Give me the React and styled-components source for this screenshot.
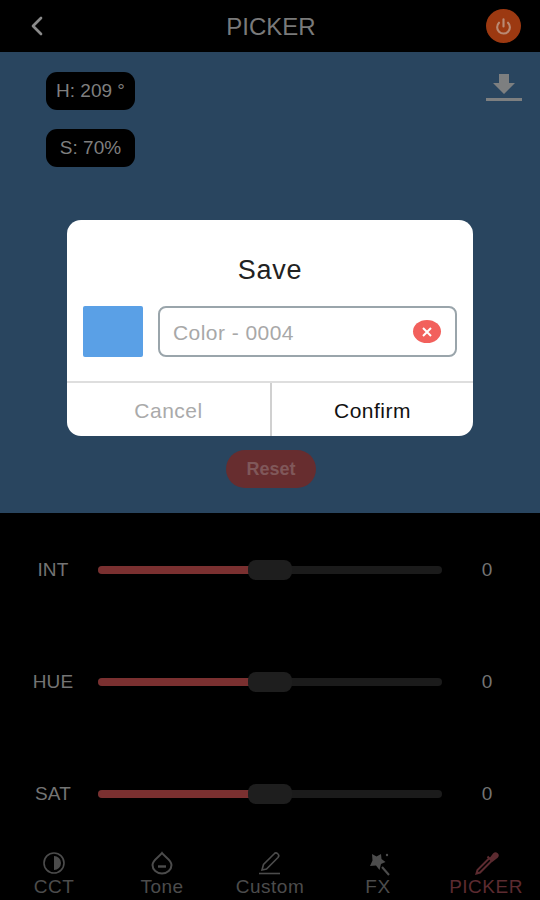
import styled, { createGlobalStyle } from "styled-components";
import { LuChevronLeft, LuPower } from "react-icons/lu";

const GlobalStyle = createGlobalStyle`
  html, body {
    margin: 0;
    background: #000;
    font-family: "Liberation Sans", Arial, sans-serif;
  }
`

const Screen = styled.div`
  position: relative;
  width: 540px;
  height: 900px;
  overflow: hidden;
  display: flex;
  flex-direction: column;
  background: #000;
`

const Header = styled.header`
  height: 52px;
  flex-shrink: 0;
  display: grid;
  grid-template-columns: 1fr auto 1fr;
  align-items: center;
  padding: 0 19px 0 21px;
  color: #7a7a7a;
`

const BackBtn = styled.div`
  display: flex;
  font-size: 32px;
  color: #8a8a8a;
`

const Title = styled.h1`
  margin: 2px 0 0;
  font-size: 24px;
  font-weight: 400;
`

const PowerBtn = styled.div`
  justify-self: end;
  width: 35px;
  height: 34px;
  border-radius: 50%;
  background: #9c3911;
  color: #b98a74;
  display: flex;
  align-items: center;
  justify-content: center;
  font-size: 17px;

  svg {
    stroke-width: 3;
  }
`

const Panel = styled.section`
  height: 461px;
  flex-shrink: 0;
  box-sizing: border-box;
  padding: 20px 18px 25px 46px;
  background: #29455f;
  display: flex;
  flex-direction: column;
`

const PanelTop = styled.div`
  display: flex;
  justify-content: space-between;
  align-items: flex-start;
`

const Chips = styled.div`
  display: flex;
  flex-direction: column;
  gap: 19px;
`

const Chip = styled.div`
  width: 89px;
  height: 38px;
  border-radius: 11px;
  background: #000;
  color: #7f7f7f;
  font-size: 19px;
  display: flex;
  align-items: center;
  justify-content: center;
`

const DownloadIcon = styled.svg`
  width: 36px;
  height: 28px;
  margin-top: 2px;
  fill: #7d7f80;
`

const ResetBtn = styled.div`
  margin: auto 0 0 180px;
  width: 90px;
  height: 38px;
  border-radius: 19px;
  background: #672d2f;
  color: #80585a;
  font-size: 18px;
  font-weight: 700;
  display: flex;
  align-items: center;
  justify-content: center;
`

const Sliders = styled.section`
  flex: 1;
  display: flex;
  flex-direction: column;
  gap: 92px;
  padding-top: 46px;
`

const SliderRow = styled.div`
  height: 20px;
  display: grid;
  grid-template-columns: 98px 344px 90px;
  align-items: center;
  color: #747474;
  font-size: 19px;
  line-height: 20px;
  text-align: center;
`

const SliderLabel = styled.span`
  padding: 1px 0 0 8px;
  letter-spacing: 0.2px;
`

const SliderValue = styled.span`
  padding-top: 1px;
`

const Track = styled.div`
  position: relative;
  height: 8px;
  border-radius: 4px;
  background: #1b1b1b;
`

const Fill = styled.div`
  height: 100%;
  border-radius: 4px 0 0 4px;
  background: #7a3030;
`

const Thumb = styled.div`
  position: absolute;
  top: -6px;
  width: 44px;
  height: 20px;
  border-radius: 8px;
  background: #1e1e1e;
`

const TabBar = styled.nav`
  height: 52px;
  box-sizing: border-box;
  padding-top: 2px;
  flex-shrink: 0;
  display: grid;
  grid-template-columns: repeat(5, 108px);
`

const Tab = styled.div`
  display: flex;
  flex-direction: column;
  align-items: center;
  color: ${(props) => (props.$active ? "#5c2b30" : "#4c4c4c")};
  font-size: 19px;
  line-height: 22px;
  letter-spacing: 0.5px;
`

const TabIcon = styled.svg`
  width: 26px;
  height: 26px;
  fill: none;
  stroke: currentColor;
  stroke-width: 1.6;
`

const Modal = styled.div`
  position: absolute;
  left: 67px;
  top: 220px;
  width: 406px;
  height: 216px;
  border-radius: 14px;
  background: #fff;
  display: flex;
  flex-direction: column;
  overflow: hidden;
`

const ModalTitle = styled.div`
  height: 86px;
  padding-top: 15px;
  box-sizing: border-box;
  display: flex;
  align-items: center;
  justify-content: center;
  color: #222;
  font-size: 27px;
  letter-spacing: 0.7px;
`

const ModalBody = styled.div`
  display: flex;
  gap: 15px;
  padding: 0 16px;
`

const Swatch = styled.div`
  width: 60px;
  height: 51px;
  border-radius: 2px;
  background: #5aa0e6;
`

const NameField = styled.div`
  flex: 1;
  box-sizing: border-box;
  border: 2px solid #9aa5ab;
  border-radius: 8px;
  padding: 2px 14px 0 13px;
  display: flex;
  align-items: center;
  justify-content: space-between;
  color: #a8a8a8;
  font-size: 21px;
  letter-spacing: 0.45px;
`

const ClearBtn = styled.div`
  width: 28px;
  height: 23px;
  margin-top: -2px;
  border-radius: 50%;
  background: #f2605c;
  display: flex;
  align-items: center;
  justify-content: center;
`

const ModalActions = styled.div`
  margin-top: auto;
  height: 53px;
  border-top: 2px solid #dedede;
  display: grid;
  grid-template-columns: 1fr 1fr;
`

const ActionBtn = styled.div`
  display: flex;
  align-items: center;
  justify-content: center;
  padding-top: 2px;
  font-size: 21px;
  letter-spacing: 0.5px;
  color: ${(props) => (props.$primary ? "#111" : "#aaa")};
  border-left: ${(props) => (props.$primary ? "2px solid #d0d0d0" : "none")};
`

const sliders = ["INT", "HUE", "SAT"];

function App() {
  return (
    <Screen>
      <GlobalStyle />
      <Header>
        <BackBtn><LuChevronLeft /></BackBtn>
        <Title>PICKER</Title>
        <PowerBtn><LuPower /></PowerBtn>
      </Header>

      <Panel>
        <PanelTop>
          <Chips>
            <Chip>H: 209 °</Chip>
            <Chip>S: 70%</Chip>
          </Chips>
          <DownloadIcon viewBox="0 0 36 28">
            <path d="M13 0h10v9h6L18 20 7 9h6z" />
            <rect x="0" y="24" width="36" height="3" />
          </DownloadIcon>
        </PanelTop>
        <ResetBtn>Reset</ResetBtn>
      </Panel>

      <Sliders>
        {sliders.map((name) => (
          <SliderRow key={name}>
            <SliderLabel>{name}</SliderLabel>
            <Track>
              <Fill style={{ width: "44%" }} />
              <Thumb style={{ left: "43.6%" }} />
            </Track>
            <SliderValue>0</SliderValue>
          </SliderRow>
        ))}
      </Sliders>

      <TabBar>
        <Tab>
          <TabIcon viewBox="0 0 26 26">
            <circle cx="13" cy="13" r="10" />
            <path d="M13 6a7 7 0 0 1 0 14z" fill="currentColor" stroke="none" />
          </TabIcon>
          CCT
        </Tab>
        <Tab>
          <TabIcon viewBox="0 0 26 26">
            <path d="M13 3C16 7 22.500 10 22.500 15a9.500 8.500 0 0 1-19 0C3.500 10 10 7 13 3z" strokeWidth="2" />
            <path d="M9 16.500h8" strokeWidth="2.400" />
          </TabIcon>
          Tone
        </Tab>
        <Tab>
          <TabIcon viewBox="0 0 26 26">
            <path d="M5 20l1.500-5.500L17 4a2.300 2.300 0 0 1 4 3.500L9.500 19z" />
            <path d="M2 23.500h21" />
          </TabIcon>
          Custom
        </Tab>
        <Tab>
          <TabIcon viewBox="0 0 26 26">
            <path d="M7 4l4.500 2.500L16 4l.5 5 4 3-4.500 2-1.500 6-3.500-4.500-6 .5 2.500-5.500z" fill="currentColor" stroke="none" />
            <path d="M17 17l7 8" strokeWidth="2" />
            <circle cx="22" cy="5" r="1.200" fill="currentColor" stroke="none" />
          </TabIcon>
          FX
        </Tab>
        <Tab $active>
          <TabIcon viewBox="0 0 26 26">
            <path d="M16 8.500L4.500 20l-1 3.500 3.500-1L18.500 11" strokeWidth="2" />
            <path d="M14.500 6.500l5 5M17 9l4-5a2 2 0 0 1 3 3l-5 4z" fill="currentColor" strokeWidth="2" />
          </TabIcon>
          PICKER
        </Tab>
      </TabBar>

      <Modal>
        <ModalTitle>Save</ModalTitle>
        <ModalBody>
          <Swatch />
          <NameField>
            Color - 0004
            <ClearBtn>
              <svg width="12" height="12" viewBox="0 0 12 12" stroke="#fff" strokeWidth="2">
                <path d="M2 2l8 8M10 2l-8 8" />
              </svg>
            </ClearBtn>
          </NameField>
        </ModalBody>
        <ModalActions>
          <ActionBtn>Cancel</ActionBtn>
          <ActionBtn $primary>Confirm</ActionBtn>
        </ModalActions>
      </Modal>
    </Screen>
  );
}

export default App;
